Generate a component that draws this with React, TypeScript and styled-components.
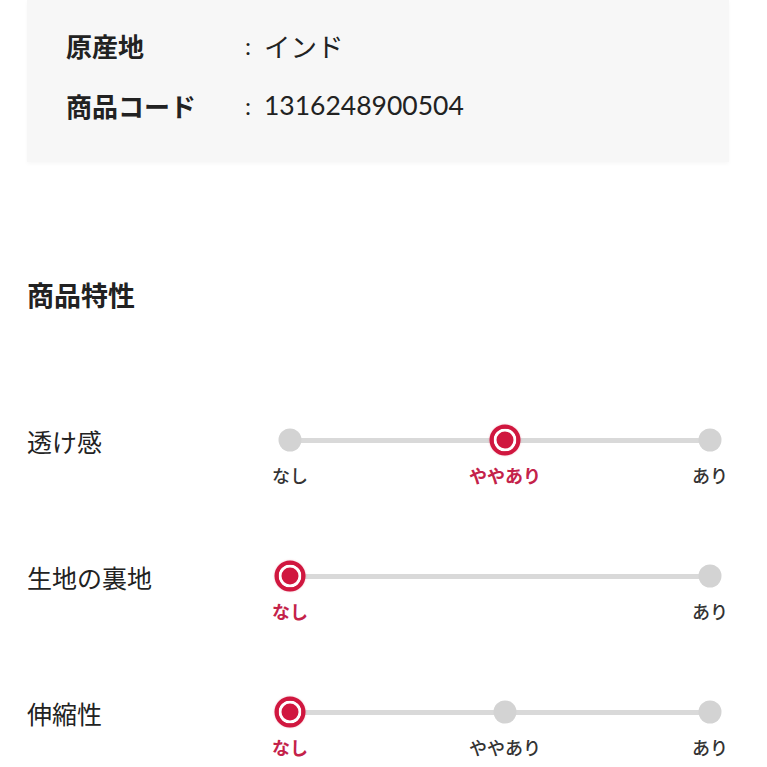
import styled, { createGlobalStyle } from "styled-components";

const GlobalStyle = createGlobalStyle`
  body {
    margin: 0;
    background: #fff;
    font-family: "Lato", "Noto Sans CJK JP", sans-serif;
    color: #222;
  }
`;

const Page = styled.div`
  width: 767px;
  height: 767px;
  overflow: hidden;
`;

const SpecCard = styled.div`
  margin-left: 27px;
  width: 702px;
  padding: 15px 0 27px 39px;
  box-sizing: border-box;
  background: #f7f7f7;
  box-shadow: 0 2px 4px rgba(0, 0, 0, 0.03);
`;

const SpecRow = styled.div`
  display: grid;
  grid-template-columns: 179px 1fr;
  height: 60px;
  align-items: center;
  font-size: 26px;
`;

const SpecLabel = styled.div`
  font-weight: 700;
`;

const SpecValue = styled.div`
  display: flex;
  align-items: center;
  font-size: 26.5px;
`;

const Colon = styled.span`
  width: 19px;
  font-size: 24px;
`;

const Section = styled.section`
  padding-left: 27px;
`;

const Heading = styled.h2`
  margin: 117px 0 0;
  font-size: 27px;
  line-height: 34px;
  font-weight: 700;
`;

const List = styled.div`
  display: flex;
  flex-direction: column;
  gap: 73px;
  margin-top: 112px;
`;

const Row = styled.div`
  display: grid;
  grid-template-columns: 250px 446px;
  align-items: start;
`;

const RowLabel = styled.div`
  font-size: 25px;
  line-height: 34px;
`;

const Slider = styled.div`
  padding: 0 13px;
`;

const TrackArea = styled.div`
  position: relative;
  height: 30px;
`;

const Track = styled.div`
  position: absolute;
  left: 0;
  right: 0;
  top: 13px;
  height: 5px;
  background: #d9d9d9;
`;

const Dot = styled.span<{ $active?: boolean }>`
  position: absolute;
  top: 15px;
  transform: translate(-50%, -50%);
  border-radius: 50%;
  box-sizing: border-box;
  width: ${(p) => (p.$active ? "31px" : "23px")};
  height: ${(p) => (p.$active ? "31px" : "23px")};
  background: ${(p) => (p.$active ? "#d0173f" : "#d3d3d3")};
  border: ${(p) => (p.$active ? "4px solid #d0173f" : "none")};
  box-shadow: ${(p) =>
    p.$active ? "inset 0 0 0 3px #fff, 0 0 2px rgba(208,23,63,0.3)" : "none"};
`;

const Ticks = styled.div`
  position: relative;
  height: 24px;
  margin-top: 9px;
`;

const Tick = styled.span<{ $active?: boolean }>`
  position: absolute;
  top: 0;
  transform: translateX(-50%);
  white-space: nowrap;
  font-size: 18px;
  line-height: 24px;
  font-weight: ${(p) => (p.$active ? 700 : 500)};
  color: ${(p) => (p.$active ? "#c4224a" : "#333")};
`;

type Stop = { label: string; at: number };

const stops3: Stop[] = [
  { label: "なし", at: 0 },
  { label: "ややあり", at: 51.2 },
  { label: "あり", at: 100 },
];
const stops2: Stop[] = [
  { label: "なし", at: 0 },
  { label: "あり", at: 100 },
];

const traits = [
  { name: "透け感", stops: stops3, value: 1 },
  { name: "生地の裏地", stops: stops2, value: 0 },
  { name: "伸縮性", stops: stops3, value: 0 },
];

const App = () => (
  <Page>
    <GlobalStyle />
    <SpecCard>
      <SpecRow>
        <SpecLabel>原産地</SpecLabel>
        <SpecValue>
          <Colon>:</Colon>インド
        </SpecValue>
      </SpecRow>
      <SpecRow>
        <SpecLabel>商品コード</SpecLabel>
        <SpecValue>
          <Colon>:</Colon>1316248900504
        </SpecValue>
      </SpecRow>
    </SpecCard>
    <Section>
      <Heading>商品特性</Heading>
      <List>
        {traits.map((t) => (
          <Row key={t.name}>
            <RowLabel>{t.name}</RowLabel>
            <Slider>
              <TrackArea>
                <Track />
                {t.stops.map((s, i) => (
                  <Dot
                    key={s.label}
                    $active={i === t.value}
                    style={{ left: `${s.at}%` }}
                  />
                ))}
              </TrackArea>
              <Ticks>
                {t.stops.map((s, i) => (
                  <Tick
                    key={s.label}
                    $active={i === t.value}
                    style={{ left: `${s.at}%` }}
                  >
                    {s.label}
                  </Tick>
                ))}
              </Ticks>
            </Slider>
          </Row>
        ))}
      </List>
    </Section>
  </Page>
);

export default App;
